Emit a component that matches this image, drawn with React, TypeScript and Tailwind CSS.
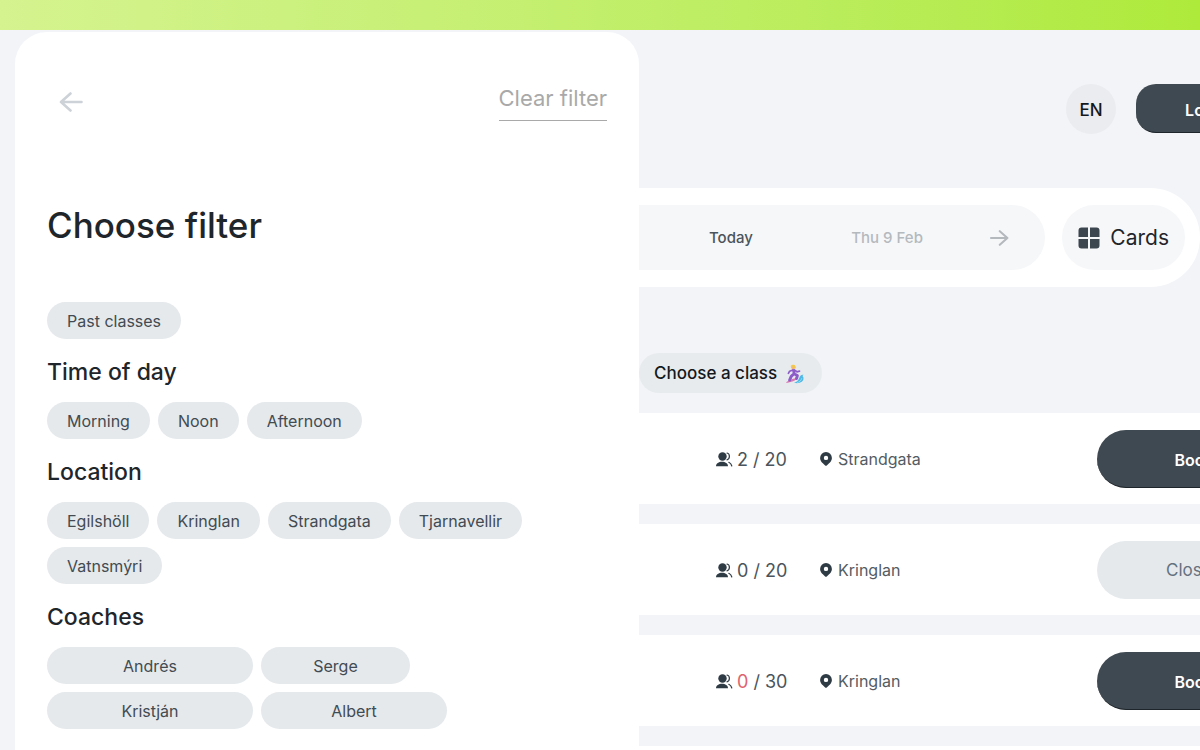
import React from 'react'

type ClassType = {
    id: number
    booked: number
    capacity: number
    location: string
    open: boolean
    highlight?: boolean
}

const classes: ClassType[] = [
    { id: 1, booked: 2, capacity: 20, location: 'Strandgata', open: true },
    { id: 2, booked: 0, capacity: 20, location: 'Kringlan', open: false },
    { id: 3, booked: 0, capacity: 30, location: 'Kringlan', open: true, highlight: true },
]

const timesOfDay = ['Morning', 'Noon', 'Afternoon']
const locations = ['Egilshöll', 'Kringlan', 'Strandgata', 'Tjarnavellir', 'Vatnsmýri']

const ArrowIcon = ({ className }: { className: string }) => (
    <svg
        viewBox="0 0 24 20"
        fill="none"
        stroke="currentColor"
        strokeWidth="2.6"
        strokeLinecap="round"
        strokeLinejoin="round"
        className={className}
        aria-hidden="true"
    >
        <path d="M2 10h20.5M13 1.500 22.500 10 13 18.500" />
    </svg>
)

const PeopleIcon = () => (
    <svg viewBox="0 0 17 15" className="h-[15px] w-[17px] text-[#2f3b44]" aria-hidden="true">
        <circle cx="6.500" cy="4.500" r="4.200" fill="currentColor" />
        <path d="M0 14.200c0-2.900 2.800-4.500 6-4.500s6 1.600 6 4.500z" fill="currentColor" />
        <path
            d="M11 1c3.200.6 3.200 6 0 6.800M12.800 10.300c1.500.7 2.600 2 3 3.700"
            fill="none"
            stroke="currentColor"
            strokeWidth="1.200"
            strokeLinecap="round"
        />
    </svg>
)

const PinIcon = () => (
    <svg viewBox="0 0 12 14" className="h-[14px] w-3 text-[#2f3b44]" aria-hidden="true">
        <path
            d="M6 0a5.900 5.900 0 0 0-5.900 5.900C.1 9.200 3.200 11.600 6 14c2.800-2.400 5.900-4.800 5.900-8.100A5.900 5.900 0 0 0 6 0zm0 3.700a2.200 2.200 0 1 1 0 4.400 2.200 2.200 0 0 1 0-4.400z"
            fill="currentColor"
            fillRule="evenodd"
        />
    </svg>
)

const GridIcon = () => (
    <svg viewBox="0 0 22 22" className="size-[22px] text-[#3b464f]" fill="currentColor" aria-hidden="true">
        <path d="M3.500.5H10V10H.5V3.500a3 3 0 0 1 3-3zM12 .5h6.500a3 3 0 0 1 3 3V10H12zM.5 12H10v9.500H3.500a3 3 0 0 1-3-3zM12 12h9.500v6.500a3 3 0 0 1-3 3H12z" />
    </svg>
)

const SurferIcon = () => (
    <svg viewBox="0 0 20 20" className="size-5" aria-hidden="true">
        <path d="M9 18.700c3-.7 4.300-2.200 5.300-5 .8-2.300 2.500-3.500 4.300-2.900-1.100.8-1.300 1.700-.3 2.300.9 3.100-1.200 5.700-5 6-1.600.1-3 0-4.300-.4z" fill="#4fb9e6" />
        <path d="M12 18.500c2.500-.3 4-1.700 4.800-4.300" fill="none" stroke="#8bd8f2" strokeWidth="1" />
        <path d="M.8 18.700C2.500 16.500 8 14.500 13.300 13.400c-2 2.800-7.800 5.400-12.500 5.300z" fill="#d979b4" />
        <path
            d="M8.500 6.500 9.400 10l3 1.500-.9 3M9 9.800l-2.800 2.600-1.600 3.700"
            fill="none"
            stroke="#8c5cc8"
            strokeWidth="2.900"
            strokeLinecap="round"
            strokeLinejoin="round"
        />
        <path
            d="M8 6 4.600 7.200 3.400 9.300M9.300 6l2.600 1.800 2.600-.6"
            fill="none"
            stroke="#8c5cc8"
            strokeWidth="1.700"
            strokeLinecap="round"
            strokeLinejoin="round"
        />
        <circle cx="8.200" cy="3.200" r="2" fill="#f3b66b" />
        <path d="M5.500 2.300C6.700.4 9.500.2 10.500 2.300c.4 1 .2 1.900-.5 2.600-.2-1.300-1-2-2.200-2-.8 0-1.500-.2-2.300-.6z" fill="#f2c94c" />
    </svg>
)

interface ChipProps {
    label: string
    className?: string
}

const Chip = ({ label, className = '' }: ChipProps) => (
    <button
        type="button"
        className={`h-[37px] rounded-full bg-[#e5e9ec] px-5 pt-px text-[#424b52] ${className}`}
    >
        {label}
    </button>
)

const SectionTitle = ({ children }: { children: React.ReactNode }) => (
    <h2 className="mt-[18px] mb-[14px] text-[23px] leading-[31px] font-medium text-[#1f262b]">{children}</h2>
)

const FilterPanel = () => (
    <aside className="mt-[2px] w-[52vw] shrink-0 rounded-t-[32px] bg-white px-8">
        <div className="flex items-start justify-between pt-[51px]">
            <button type="button" aria-label="Back" className="mt-[9px] ml-3 text-[#cdd2d9]">
                <ArrowIcon className="h-5 w-[25px] rotate-180" />
            </button>
            <button
                type="button"
                className="h-[38px] border-b border-[#a9a9a9] pb-2 text-[22px] leading-7 text-[#a9a9a9]"
            >
                Clear filter
            </button>
        </div>
        <h1 className="mt-20 text-[35px] leading-[48px] font-medium text-[#1f262b]">Choose filter</h1>
        <div className="mt-[53px] flex">
            <Chip label="Past classes" />
        </div>
        <SectionTitle>Time of day</SectionTitle>
        <div className="flex flex-wrap gap-2">
            {timesOfDay.map((time) => (
                <Chip key={time} label={time} />
            ))}
        </div>
        <SectionTitle>Location</SectionTitle>
        <div className="flex flex-wrap gap-2 pr-10">
            {locations.map((location) => (
                <Chip key={location} label={location} />
            ))}
        </div>
        <SectionTitle>Coaches</SectionTitle>
        <div className="flex flex-col gap-2">
            <div className="flex gap-2">
                <Chip label="Andrés" className="w-[206px]" />
                <Chip label="Serge" className="w-[149px]" />
            </div>
            <div className="flex gap-2">
                <Chip label="Kristján" className="w-[206px]" />
                <Chip label="Albert" className="w-[186px]" />
            </div>
        </div>
    </aside>
)

const ClassRow = ({ item }: { item: ClassType }) => (
    <li className="flex h-[91px] items-center bg-white pr-5 pl-[77px]">
        <div className="flex w-[104px] items-center gap-1 pt-[2px] text-[18px] text-[#4b545b]">
            <PeopleIcon />
            <span>
                <span className={item.highlight ? 'text-[#e0626e]' : ''}>{item.booked}</span> / {item.capacity}
            </span>
        </div>
        <div className="flex items-center gap-[6px] text-[#535c63]">
            <PinIcon />
            {item.location}
        </div>
        {item.open ? (
            <button
                type="button"
                className="ml-auto h-[58px] w-[194px] rounded-full border-b border-[#1f262b] bg-[#3f4951] pt-[3px] font-semibold text-white"
            >
                Book
            </button>
        ) : (
            <button
                type="button"
                className="ml-auto h-[58px] w-[194px] rounded-full bg-[#e5e9ec] pt-[3px] text-[17px] text-[#647280]"
            >
                Closed
            </button>
        )}
    </li>
)

const Schedule = () => (
    <main className="min-w-0 flex-1 overflow-hidden">
        {/* wider than the visible part, runs off the right edge */}
        <div className="-mr-[111px]">
            <div className="flex justify-end gap-5 pt-[54px] pr-[30px]">
                <button
                    type="button"
                    className="size-[50px] rounded-full bg-[#eaecef] pt-[3px] text-[17px] font-medium text-[#14191d]"
                >
                    EN
                </button>
                <button
                    type="button"
                    className="h-[49px] w-[145px] rounded-[20px] border-b border-[#1f262b] bg-[#3f4951] pt-[3px] font-semibold text-white"
                >
                    Log in
                </button>
            </div>
            <div className="mt-[54px] mr-[111px] flex gap-[17px] rounded-r-full bg-white py-[17px] pr-[15px]">
                <div className="flex h-[65px] flex-1 items-center justify-between rounded-r-full bg-[#f6f7f9] pr-9 pl-[70px] text-[15px] font-medium">
                    <button type="button" className="pt-px text-[#4b545b]">
                        Today
                    </button>
                    <button type="button" className="ml-8 pt-px text-[#b4b9be]">
                        Thu 9 Feb
                    </button>
                    <button type="button" aria-label="Next day" className="text-[#b4b9be]">
                        <ArrowIcon className="h-4 w-5" />
                    </button>
                </div>
                <button
                    type="button"
                    className="flex h-[65px] items-center gap-[10px] rounded-full bg-[#f6f7f9] px-4 text-[21px] text-[#1f262b]"
                >
                    <GridIcon />
                    Cards
                </button>
            </div>
            <button
                type="button"
                className="mt-[66px] flex h-10 items-center gap-2 rounded-full bg-[#e8ebee] pt-px pr-[17px] pl-[15px] text-[17px] font-medium text-[#14191d]"
            >
                Choose a class
                <SurferIcon />
            </button>
            <ul className="mt-5 flex flex-col gap-5">
                {classes.map((item) => (
                    <ClassRow key={item.id} item={item} />
                ))}
                <li className="h-[91px] bg-white" />
            </ul>
        </div>
    </main>
)

const App = () => {
    return (
        <div className="flex h-screen flex-col overflow-hidden bg-[#f2f4f8] font-['Inter',sans-serif]">
            <div className="h-[30px] shrink-0 bg-linear-to-r from-[#d5f38f] to-[#aeea3a]" />
            <div className="flex min-h-0 flex-1 pl-[15px]">
                <FilterPanel />
                <Schedule />
            </div>
        </div>
    )
}

export default App
